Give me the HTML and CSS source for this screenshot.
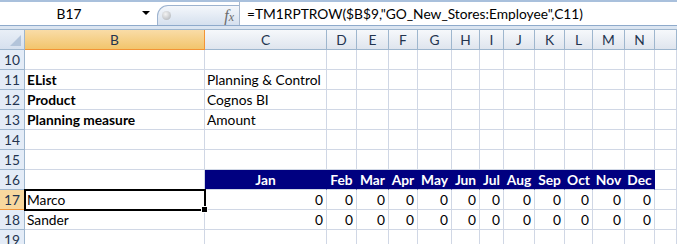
FILE: index.html
```html
<!DOCTYPE html>
<html lang="en">
<head>
    <meta charset="UTF-8">
    <title>Sheet - TM1 report</title>
    <link rel="stylesheet" href="styles.css">
</head>
<body>
<!-- Formula bar -->
<div class="formula-bar">
    <div class="name-box">B17</div>
    <div class="name-arrow"></div>
    <div class="fx-button">
        <span class="knob"></span>
        <span class="fx">f<small>x</small></span>
    </div>
    <div class="formula">=TM1RPTROW($B$9,"GO_New_Stores:Employee",C11)</div>
</div>
<div class="bar-gap"></div>

<!-- Sheet grid -->
<div class="sheet">
    <div class="hd corner"></div>
    <div class="hd col sel">B</div>
    <div class="hd col">C</div>
    <div class="hd col">D</div>
    <div class="hd col">E</div>
    <div class="hd col">F</div>
    <div class="hd col">G</div>
    <div class="hd col">H</div>
    <div class="hd col">I</div>
    <div class="hd col">J</div>
    <div class="hd col">K</div>
    <div class="hd col">L</div>
    <div class="hd col">M</div>
    <div class="hd col">N</div>
    <div class="hd col"></div>

    <!-- row 10 -->
    <div class="hd row">10</div>
    <div class="c"></div><div class="c"></div><div class="c"></div><div class="c"></div><div class="c"></div><div class="c"></div><div class="c"></div><div class="c"></div><div class="c"></div><div class="c"></div><div class="c"></div><div class="c"></div><div class="c"></div><div class="c"></div>

    <!-- row 11 -->
    <div class="hd row">11</div>
    <div class="c b">EList</div><div class="c">Planning &amp; Control</div><div class="c"></div><div class="c"></div><div class="c"></div><div class="c"></div><div class="c"></div><div class="c"></div><div class="c"></div><div class="c"></div><div class="c"></div><div class="c"></div><div class="c"></div><div class="c"></div>

    <!-- row 12 -->
    <div class="hd row">12</div>
    <div class="c b">Product</div><div class="c">Cognos BI</div><div class="c"></div><div class="c"></div><div class="c"></div><div class="c"></div><div class="c"></div><div class="c"></div><div class="c"></div><div class="c"></div><div class="c"></div><div class="c"></div><div class="c"></div><div class="c"></div>

    <!-- row 13 -->
    <div class="hd row">13</div>
    <div class="c b">Planning measure</div><div class="c">Amount</div><div class="c"></div><div class="c"></div><div class="c"></div><div class="c"></div><div class="c"></div><div class="c"></div><div class="c"></div><div class="c"></div><div class="c"></div><div class="c"></div><div class="c"></div><div class="c"></div>

    <!-- row 14 -->
    <div class="hd row">14</div>
    <div class="c"></div><div class="c"></div><div class="c"></div><div class="c"></div><div class="c"></div><div class="c"></div><div class="c"></div><div class="c"></div><div class="c"></div><div class="c"></div><div class="c"></div><div class="c"></div><div class="c"></div><div class="c"></div>

    <!-- row 15 -->
    <div class="hd row">15</div>
    <div class="c"></div><div class="c"></div><div class="c"></div><div class="c"></div><div class="c"></div><div class="c"></div><div class="c"></div><div class="c"></div><div class="c"></div><div class="c"></div><div class="c"></div><div class="c"></div><div class="c"></div><div class="c"></div>

    <!-- row 16: months -->
    <div class="hd row">16</div>
    <div class="c"></div>
    <div class="c m">Jan</div><div class="c m">Feb</div><div class="c m">Mar</div><div class="c m">Apr</div><div class="c m">May</div><div class="c m">Jun</div><div class="c m">Jul</div><div class="c m">Aug</div><div class="c m">Sep</div><div class="c m">Oct</div><div class="c m">Nov</div><div class="c m">Dec</div>
    <div class="c"></div>

    <!-- row 17 -->
    <div class="hd row sel">17</div>
    <div class="c active">Marco</div>
    <div class="c n">0</div><div class="c n">0</div><div class="c n">0</div><div class="c n">0</div><div class="c n">0</div><div class="c n">0</div><div class="c n">0</div><div class="c n">0</div><div class="c n">0</div><div class="c n">0</div><div class="c n">0</div><div class="c n">0</div>
    <div class="c"></div>

    <!-- row 18 -->
    <div class="hd row">18</div>
    <div class="c">Sander</div>
    <div class="c n">0</div><div class="c n">0</div><div class="c n">0</div><div class="c n">0</div><div class="c n">0</div><div class="c n">0</div><div class="c n">0</div><div class="c n">0</div><div class="c n">0</div><div class="c n">0</div><div class="c n">0</div><div class="c n">0</div>
    <div class="c"></div>

    <!-- row 19 -->
    <div class="hd row">19</div>
    <div class="c"></div><div class="c"></div><div class="c"></div><div class="c"></div><div class="c"></div><div class="c"></div><div class="c"></div><div class="c"></div><div class="c"></div><div class="c"></div><div class="c"></div><div class="c"></div><div class="c"></div><div class="c"></div>
</div>
</body>
</html>
```

FILE: styles.css
```css
body {
    margin: 0;
    background: #ffffff;
    font-family: Lato, "Liberation Sans", sans-serif;
    font-size: 13.75px;
    color: #000;
    overflow: hidden;
}

/* ---------- formula bar ---------- */

.formula-bar {
    display: flex;
    height: 23px;
    border-top: 2px solid #a9c0dc;
    border-bottom: 1px solid #8eaacb;
    background: #ffffff;
}

.name-box {
    width: 138px;
    line-height: 23px;
    text-align: center;
}

.name-arrow {
    width: 0;
    height: 0;
    margin: 9px 0 0 4px;
    border-left: 4px solid transparent;
    border-right: 4px solid transparent;
    border-top: 4px solid #000;
}

.fx-button {
    width: 82px;
    height: 20px;
    margin: 3px 0 0 7px;
    box-sizing: border-box;
    border: 1px solid #9db3cf;
    border-right: none;
    border-bottom: none;
    border-radius: 11px 0 0 0;
    background: linear-gradient(#f4f7fb, #d5e0ee);
    display: flex;
    align-items: center;
}

.knob {
    width: 9px;
    height: 9px;
    margin-left: 4px;
    border-radius: 50%;
    background: radial-gradient(circle at 40% 35%, #f4f4f4, #a9adb3);
}

.fx {
    margin-left: auto;
    margin-right: 5px;
    font-family: "Liberation Serif", serif;
    font-style: italic;
    font-size: 16px;
    color: #6c6c6c;
}

.fx small {
    font-size: 12px;
}

.formula {
    flex: 1;
    border-left: 1px solid #a8b8cd;
    padding-left: 7px;
    line-height: 23px;
    white-space: nowrap;
}

.bar-gap {
    height: 3px;
    background: #dbe5f1;
}

/* ---------- sheet ---------- */

.sheet {
    display: grid;
    grid-template-columns: 25px 180px 122px 30px 32px 29px 34px 28px 24px 31px 30px 28px 32px 30px 1fr;
    grid-auto-rows: 20px;
    border-top: 1px solid #9eb6ce;
}

.sheet > div {
    box-sizing: border-box;
    border-right: 1px solid #d0d7e5;
    border-bottom: 1px solid #d0d7e5;
    line-height: 19px;
    white-space: nowrap;
}

.hd {
    text-align: center;
    color: #23344f;
}

.sheet > .col {
    background: linear-gradient(#f6f8fb, #dfe5ee);
    border-right-color: #9eb6ce;
    border-bottom-color: #9eb6ce;
}

.sheet > .col.sel {
    background: linear-gradient(#f9dca7, #f2c56c);
    border-right-color: #f29436;
    border-bottom-color: #f29436;
}

.sheet > .corner {
    position: relative;
    background: linear-gradient(#e9eff7, #d6e0ee);
    border-right-color: #9eb6ce;
    border-bottom-color: #9eb6ce;
}

.corner::after {
    content: "";
    position: absolute;
    right: 3px;
    bottom: 3px;
    width: 0;
    height: 0;
    border-left: 11px solid transparent;
    border-bottom: 11px solid #b3c4da;
}

.sheet > .row {
    background: #e4ecf7;
    border-right-color: #9eb6ce;
    border-bottom-color: #9eb6ce;
}

.sheet > .row.sel {
    background: #f8d89e;
    border-right-color: #f29436;
    border-bottom-color: #f29436;
}

.c {
    padding: 0 2px;
    overflow: visible;
}

.b {
    font-weight: bold;
}

.n {
    text-align: right;
    padding-right: 3px;
}

.sheet > .m {
    background: #000080;
    border-right-color: #000080;
    color: #ffffff;
    font-weight: bold;
    text-align: center;
    overflow: visible;
    padding: 0;
}

/* selected cell */
.active {
    position: relative;
}

.active::after {
    content: "";
    position: absolute;
    top: -1px;
    left: -1px;
    right: -2px;
    bottom: -2px;
    border: 2px solid #000;
}

.active::before {
    content: "";
    position: absolute;
    right: -4px;
    bottom: -4px;
    width: 5px;
    height: 5px;
    background: #000;
    border: 1px solid #fff;
    z-index: 1;
}
```
